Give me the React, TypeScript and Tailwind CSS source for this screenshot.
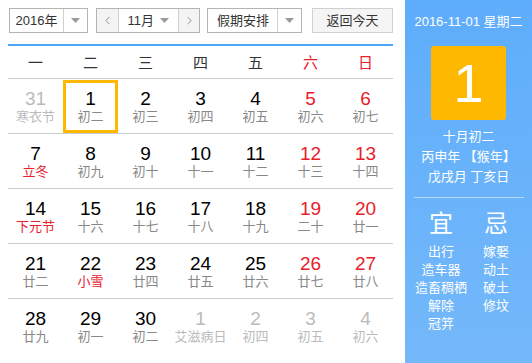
import { ChevronLeft, ChevronRight } from 'lucide-react'

type Day = {
  n: number
  sub: string
  other?: boolean
  red?: boolean
  subRed?: boolean
  selected?: boolean
}

const weekdays = ['一', '二', '三', '四', '五', '六', '日']

const rows: Day[][] = [
  [
    { n: 31, sub: '寒衣节', other: true },
    { n: 1, sub: '初二', selected: true },
    { n: 2, sub: '初三' },
    { n: 3, sub: '初四' },
    { n: 4, sub: '初五' },
    { n: 5, sub: '初六', red: true },
    { n: 6, sub: '初七', red: true },
  ],
  [
    { n: 7, sub: '立冬', subRed: true },
    { n: 8, sub: '初九' },
    { n: 9, sub: '初十' },
    { n: 10, sub: '十一' },
    { n: 11, sub: '十二' },
    { n: 12, sub: '十三', red: true },
    { n: 13, sub: '十四', red: true },
  ],
  [
    { n: 14, sub: '下元节', subRed: true },
    { n: 15, sub: '十六' },
    { n: 16, sub: '十七' },
    { n: 17, sub: '十八' },
    { n: 18, sub: '十九' },
    { n: 19, sub: '二十', red: true },
    { n: 20, sub: '廿一', red: true },
  ],
  [
    { n: 21, sub: '廿二' },
    { n: 22, sub: '小雪', subRed: true },
    { n: 23, sub: '廿四' },
    { n: 24, sub: '廿五' },
    { n: 25, sub: '廿六' },
    { n: 26, sub: '廿七', red: true },
    { n: 27, sub: '廿八', red: true },
  ],
  [
    { n: 28, sub: '廿九' },
    { n: 29, sub: '初一' },
    { n: 30, sub: '初二' },
    { n: 1, sub: '艾滋病日', other: true },
    { n: 2, sub: '初四', other: true },
    { n: 3, sub: '初五', other: true },
    { n: 4, sub: '初六', other: true },
  ],
]

const yi = ['出行', '造车器', '造畜稠栖', '解除', '冠笄']
const ji = ['嫁娶', '动土', '破土', '修坟']

function Caret() {
  return (
    <svg width="9" height="5" viewBox="0 0 9 5">
      <path d="M0 0h9L4.5 5z" fill="#9a9a9a" />
    </svg>
  )
}

export default function App() {
  return (
    <div
      className="flex h-[363px] w-[532px] overflow-hidden bg-white"
      style={{ fontFamily: '"Liberation Sans", Arial, "Noto Sans CJK SC", sans-serif' }}
    >
      <div className="w-[405px] shrink-0 pl-[8px] pr-[12px]">
        {/* toolbar */}
        <div className="mt-[8px] flex h-[25px] items-stretch text-[13px] text-[#333]">
          <div className="ml-px flex w-[79px] border border-[#b4b4b4]">
            <div className="flex w-[54px] items-center justify-center border-r border-[#d0d0d0]">2016年</div>
            <div className="flex flex-1 items-center justify-center"><Caret /></div>
          </div>
          <div className="ml-[8px] flex w-[105px] border border-[#b4b4b4]">
            <div className="flex w-[22px] items-center justify-center border-r border-[#d0d0d0] bg-[#f4f4f4]">
              <ChevronLeft size={13} strokeWidth={1.5} color="#777" />
            </div>
            <div className="flex w-[60px] items-center justify-center gap-[6px] border-r border-[#d0d0d0]">
              <span>11月</span>
              <Caret />
            </div>
            <div className="flex flex-1 items-center justify-center bg-[#f4f4f4]">
              <ChevronRight size={13} strokeWidth={1.5} color="#777" />
            </div>
          </div>
          <div className="ml-[7px] flex w-[95px] border border-[#b4b4b4]">
            <div className="flex w-[70px] items-center justify-center border-r border-[#d0d0d0]">假期安排</div>
            <div className="flex flex-1 items-center justify-center"><Caret /></div>
          </div>
          <div className="ml-[10px] flex w-[81px] items-center justify-center border border-[#d0d0d0] bg-[#f5f5f5]">
            返回今天
          </div>
        </div>

        <div className="mt-[11px] h-[2px] bg-[#4da5f7]" />

        {/* weekday header */}
        <div className="grid h-[33px] grid-cols-7 border-b border-[#cccccc] text-[15px]">
          {weekdays.map((w, i) => (
            <div
              key={w}
              className={`flex items-center justify-center pt-[2px] ${i >= 5 ? 'text-[#e8202a]' : 'text-[#333]'}`}
            >
              {w}
            </div>
          ))}
        </div>

        {rows.map((row, ri) => (
          <div
            key={ri}
            className={`grid h-[55px] grid-cols-7 ${ri < rows.length - 1 ? 'border-b border-[#cccccc]' : ''}`}
          >
            {row.map((d, ci) => {
              const numColor = d.other ? 'text-[#bbbbbb]' : d.red ? 'text-[#e8202a]' : 'text-black'
              const subColor = d.other ? 'text-[#bbbbbb]' : d.subRed ? 'text-[#e8202a]' : 'text-[#888]'
              return (
                <div
                  key={ci}
                  className={`flex flex-col items-center ${
                    d.selected ? 'mt-px border-[3px] border-[#ffb800] pt-[6px]' : 'pt-[10px]'
                  }`}
                >
                  <div className={`text-[19px] leading-[20px] ${numColor}`}>{d.n}</div>
                  <div className={`whitespace-nowrap text-[13px] leading-[16px] ${subColor}`}>{d.sub}</div>
                </div>
              )
            })}
          </div>
        ))}
      </div>

      {/* right panel */}
      <div className="flex flex-1 flex-col items-center bg-gradient-to-b from-[#5eadfb] to-[#74b8fa] text-white">
        <div className="mt-[13px] text-[13px] leading-[18px]">2016-11-01 星期二</div>
        <div className="mt-[15px] flex h-[74px] w-[75px] items-center justify-center rounded-[3px] bg-[#ffb800] text-[54px] leading-none">
          1
        </div>
        <div className="mt-[7px] flex flex-col items-center text-[13px] leading-[20px]">
          <div>十月初二</div>
          <div>丙申年 【猴年】</div>
          <div>戊戌月 丁亥日</div>
        </div>
        <div className="mt-[10px] h-px w-[110px] bg-white/50" />
        <div className="mt-[12px] flex w-full justify-center gap-[3px]">
          <div className="flex w-[52px] flex-col items-center">
            <div className="text-[24px] leading-[28px]">宜</div>
            <div className="mt-[5px] flex flex-col items-center text-[13px] leading-[18px]">
              {yi.map((t) => (
                <div key={t} className="whitespace-nowrap">{t}</div>
              ))}
            </div>
          </div>
          <div className="flex w-[52px] flex-col items-center">
            <div className="text-[24px] leading-[28px]">忌</div>
            <div className="mt-[5px] flex flex-col items-center text-[13px] leading-[18px]">
              {ji.map((t) => (
                <div key={t} className="whitespace-nowrap">{t}</div>
              ))}
            </div>
          </div>
        </div>
      </div>
    </div>
  )
}
